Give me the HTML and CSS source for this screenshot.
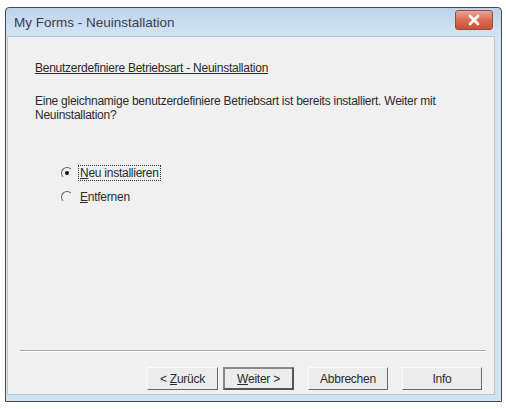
FILE: index.html
```html
<!DOCTYPE html>
<html lang="de">
<head>
    <meta charset="UTF-8">
    <title>My Forms - Neuinstallation</title>
    <link rel="stylesheet" href="styles.css">
</head>
<body>

    <div class="window">
        <div class="titlebar">
            <span class="caption">My Forms - Neuinstallation</span>
            <div class="close">
                <svg width="14" height="12" viewBox="0 0 14 12">
                    <path d="M3 2 L11 10 M11 2 L3 10" stroke="#fff" stroke-width="2.6" stroke-linecap="round"/>
                </svg>
            </div>
        </div>

        <div class="client">
            <div class="body">
                <p class="heading">Benutzerdefiniere Betriebsart - Neuinstallation</p>
                <p class="text">Eine gleichnamige benutzerdefiniere Betriebsart ist bereits installiert. Weiter mit<br>Neuinstallation?</p>

                <div class="options">
                    <div class="option">
                        <span class="radio checked"></span>
                        <span class="label focus"><u>N</u>eu installieren</span>
                    </div>
                    <div class="option">
                        <span class="radio"></span>
                        <span class="label"><u>E</u>ntfernen</span>
                    </div>
                </div>
            </div>

            <div class="rule"></div>

            <div class="buttons">
                <div class="btn"><span>&lt; <u>Z</u>urück</span></div>
                <div class="btn default"><span><u>W</u>eiter &gt;</span></div>
                <div class="btn wide"><span>Abbrechen</span></div>
                <div class="btn wide"><span>Info</span></div>
            </div>
        </div>
    </div>

</body>
</html>
```

FILE: styles.css
```css
body {
    margin: 0;
    background-color: #ffffff;
    font-family: "Liberation Sans", Arial, sans-serif;
}

.window {
    margin: 7px 0 0 5px;
    width: 497px;
    height: 395px;
    border: 1px solid #4a4a4a;
    border-radius: 4px 4px 0 0;
    background: linear-gradient(#bcd3ec, #d6e5f4 30px, #cde6f1);
    display: flex;
    flex-direction: column;
    padding: 0 6px 6px 1px;
    box-sizing: border-box;
}

.titlebar {
    height: 28px;
    display: flex;
    align-items: center;
    justify-content: space-between;
    padding-left: 7px;
    padding-right: 2px;
}

.caption {
    font-size: 13.5px;
    color: #3a3e4c;
}

.close {
    width: 36px;
    height: 18px;
    margin-top: -4px;
    border: 1px solid #9a4a3c;
    border-radius: 3px;
    background: linear-gradient(#eaa896, #da6a52 50%, #cc5238);
    display: flex;
    align-items: center;
    justify-content: center;
}

.client {
    flex: 1;
    background-color: #f0f0f0;
    border: 1px solid #b8c6d6;
    display: flex;
    flex-direction: column;
    font-size: 12px;
    color: #2a2a2a;
}

.body {
    flex: 1;
    padding: 0 0 0 27px;
}

.heading {
    margin: 24px 0 0 0;
    text-decoration: underline;
    letter-spacing: -0.25px;
}

.text {
    margin: 19px 0 0 0;
    line-height: 14px;
    letter-spacing: -0.25px;
}

.options {
    margin: 43px 0 0 26px;
    display: flex;
    flex-direction: column;
    gap: 8px;
}

.option {
    display: flex;
    align-items: center;
    gap: 5px;
}

.radio {
    width: 12px;
    height: 12px;
    border-radius: 50%;
    border: 1px solid;
    border-color: #666 #f4f4f4 #f4f4f4 #666;
    background-color: #f0f0f0;
    box-sizing: border-box;
    display: flex;
    align-items: center;
    justify-content: center;
}

.radio.checked::after {
    content: "";
    width: 4px;
    height: 4px;
    border-radius: 50%;
    background-color: #111;
}

.label {
    padding: 1px 2px;
    letter-spacing: -0.25px;
}

.label.focus {
    outline: 1px dotted #333;
    outline-offset: -1px;
}

.rule {
    margin: 0 8px 0 12px;
    border-top: 1px solid #a8a8a8;
    border-bottom: 1px solid #ffffff;
}

.buttons {
    height: 42px;
    display: flex;
    align-items: flex-start;
    padding: 15px 0 0 139px;
    box-sizing: border-box;
    gap: 5px;
}

.btn {
    width: 71px;
    height: 23px;
    box-sizing: border-box;
    border: 1px solid;
    border-color: #fafafa #6a6a6a #6a6a6a #fafafa;
    background-color: #ececec;
    display: flex;
    align-items: center;
    justify-content: center;
    letter-spacing: -0.25px;
}

.btn.default {
    border: 2px solid #555;
    border-top-color: #888;
    border-left-color: #888;
}

.btn.wide {
    width: 80px;
    margin-left: 9px;
}
```
